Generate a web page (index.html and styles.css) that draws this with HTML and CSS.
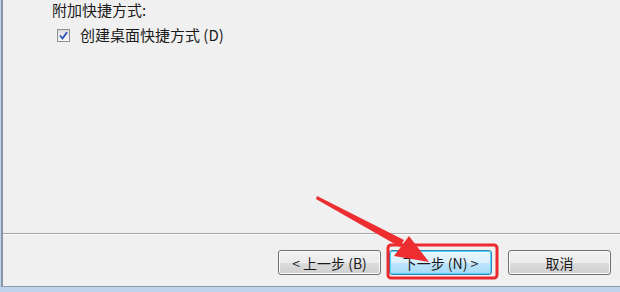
FILE: index.html
```html
<!DOCTYPE html>
<html lang="zh-CN">
<head>
    <meta charset="UTF-8">
    <meta name="viewport" content="width=device-width, initial-scale=1.0">
    <title>安装向导</title>
    <link rel="stylesheet" href="styles.css">
</head>
<body>
    <div class="window">
        <div class="content">
            <div class="group-title">附加快捷方式:</div>
            <label class="check-row">
                <span class="checkbox">
                    <svg width="9" height="9" viewBox="0 0 9 9">
                        <path d="M1 4.5 L3.5 7.5 L8 1.2" fill="none" stroke="#2a52b8" stroke-width="1.8"/>
                    </svg>
                </span>
                <span>创建桌面快捷方式 (D)</span>
            </label>
        </div>
        <div class="separator"></div>
        <div class="buttons">
            <button class="btn">&lt; 上一步 (B)</button>
            <button class="btn btn-default">下一步 (N) &gt;</button>
            <button class="btn btn-cancel">取消</button>
        </div>
    </div>

    <!-- annotation drawn over the dialog -->
    <svg class="annotation" width="620" height="292" viewBox="0 0 620 292">
        <rect x="388" y="245" width="109" height="33" rx="3" fill="none" stroke="#ea2a2e" stroke-width="3"/>
        <polygon points="317,196 404,240 400,247 316,199" fill="#ee2d30"/>
        <polygon points="429,262 394,256 409,236" fill="#ee2d30"/>
    </svg>
</body>
</html>
```

FILE: styles.css
```css
body {
    margin: 0;
    width: 620px;
    height: 292px;
    overflow: hidden;
    background: #bdd3ea;
    font-family: "Noto Sans CJK SC", "Noto Sans", sans-serif;
    font-size: 15px;
    color: #1a1a1a;
    position: relative;
}
.window {
    height: 286px;
    margin-left: 1px;
    border-left: 2px solid #8797a8;
    border-bottom: 1px solid #8d9db0;
    background: #f0f0f0;
    display: flex;
    flex-direction: column;
}
.content {
    height: 233px;
    padding-left: 49px;
    box-sizing: border-box;
    padding-top: 1px;
}
.group-title {
    line-height: 18px;
}
.check-row {
    display: flex;
    align-items: center;
    margin-top: 7px;
    margin-left: 5px;
    line-height: 18px;
}
.checkbox {
    width: 11px;
    height: 11px;
    border: 1px solid #8e8f8f;
    background: linear-gradient(#dcdcdc, #fbfbfb);
    display: flex;
    align-items: center;
    justify-content: center;
    margin-right: 10px;
}
.separator {
    height: 1px;
    background: #a7a7a7;
    border-bottom: 1px solid #fdfdfd;
}
.buttons {
    display: flex;
    justify-content: flex-end;
    gap: 8px;
    padding-top: 15px;
    padding-right: 9px;
}
.btn {
    width: 103px;
    height: 25px;
    padding: 0;
    font-family: inherit;
    font-size: 14px;
    line-height: 1;
    color: #1a1a1a;
    border: 1px solid #707070;
    border-radius: 3px;
    background: linear-gradient(#f2f2f2 0%, #ebebeb 50%, #dddddd 51%, #cfcfcf 100%);
    box-shadow: inset 0 0 0 1px #fbfbfb;
}
.btn-default {
    border-color: #3c7fb1;
    background: linear-gradient(#eaf6fd 0%, #d9f0fc 50%, #bee6fd 51%, #a7d9f5 100%);
    box-shadow: inset 0 0 0 1px #48d8fb;
}
.btn-cancel {
    margin-left: 8px;
}
.annotation {
    position: absolute;
    left: 0;
    top: 0;
}
```
